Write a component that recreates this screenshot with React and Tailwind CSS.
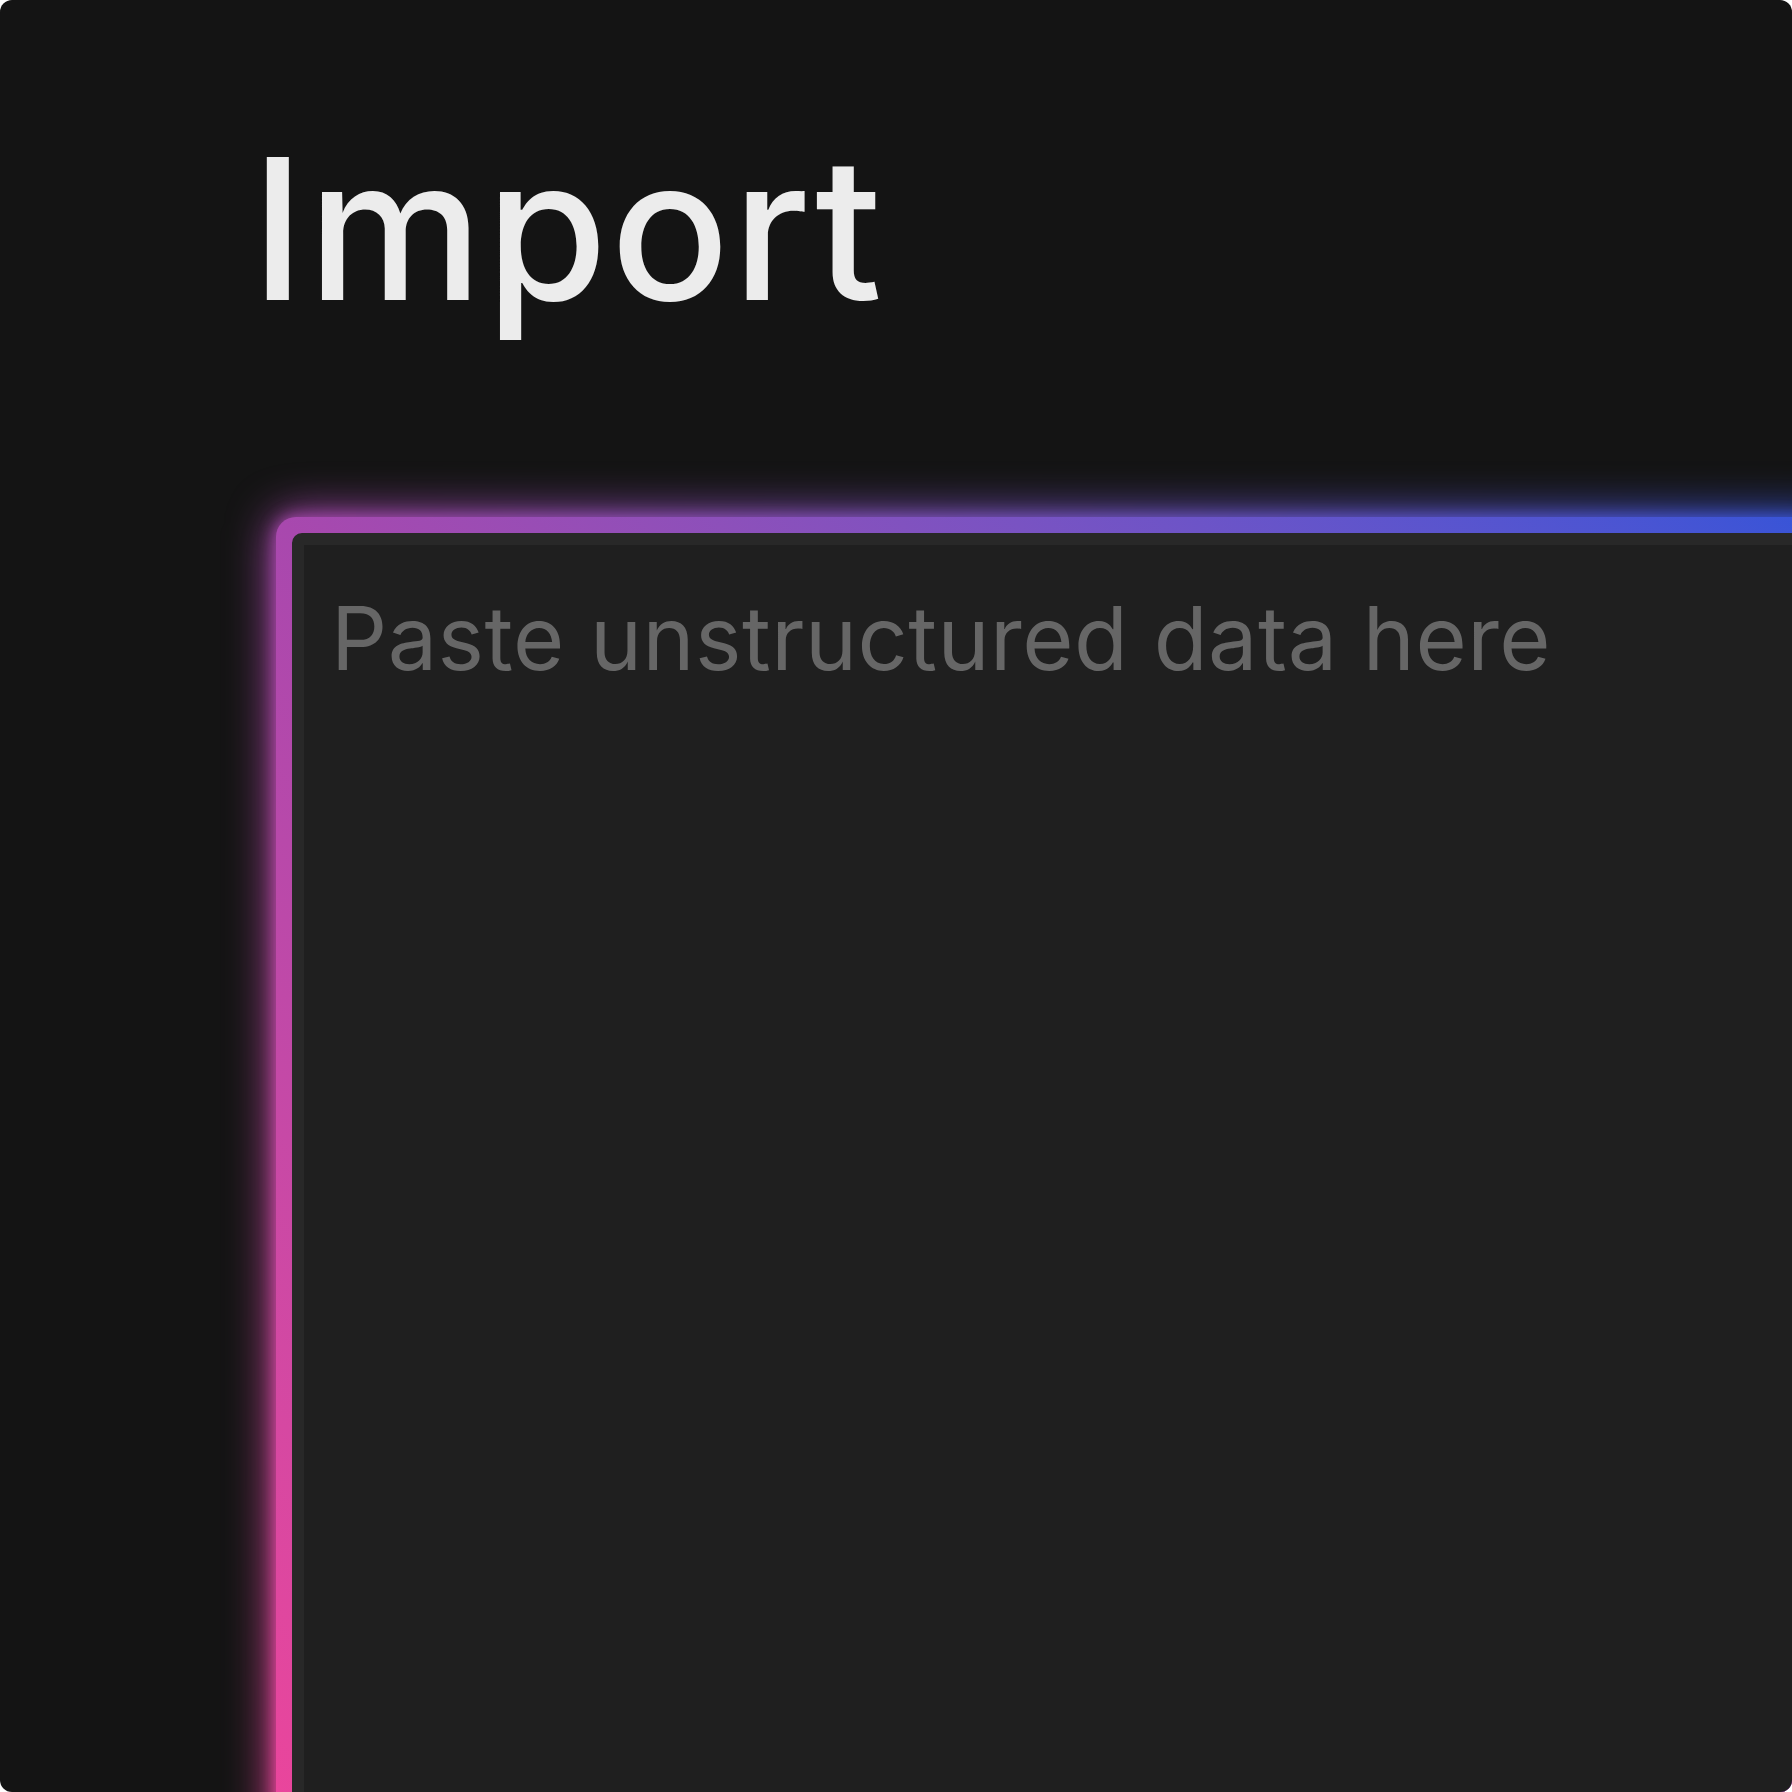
import React from "react";

export default function App() {
  return (
    <div className="w-[1792px] h-[1792px] bg-white">
      <div
        className="w-full h-full bg-[#141414] rounded-[12px] overflow-hidden flex flex-col"
        style={{ fontFamily: "Inter, 'Noto Sans', sans-serif" }}
      >
        <h1 className="pl-[251px] pt-[130px] text-[197px] leading-[1] font-medium text-[#ececec] tracking-[3px]">
          Import
        </h1>
        <div className="relative ml-[276px] mt-[190px] w-[1560px] h-[1400px] shrink-0">
          <div className="absolute -inset-[4px] rounded-[24px] bg-linear-to-tr from-[#f0449a] via-[#a848ae] to-[#3454d8] blur-[22px]" />
          <div className="absolute inset-0 rounded-[20px] bg-linear-to-tr from-[#f0449a] via-[#a848ae] to-[#3454d8] blur-[8px]" />
          <div className="relative w-full h-full rounded-[20px] bg-linear-to-tr from-[#f0449a] via-[#a848ae] to-[#3454d8] p-[16px]">
            <textarea
              className="w-full h-full resize-none rounded-[10px] border-[12px] border-[#282828] bg-[#1f1f1f] p-[27px] text-[88px] leading-[1.5] font-normal tracking-[0.5px] text-[#dddddd] placeholder:text-[#666666] outline-none"
              style={{ fontFamily: "Inter, 'Noto Sans', sans-serif" }}
              placeholder="Paste unstructured data here"
            />
          </div>
        </div>
      </div>
    </div>
  );
}
